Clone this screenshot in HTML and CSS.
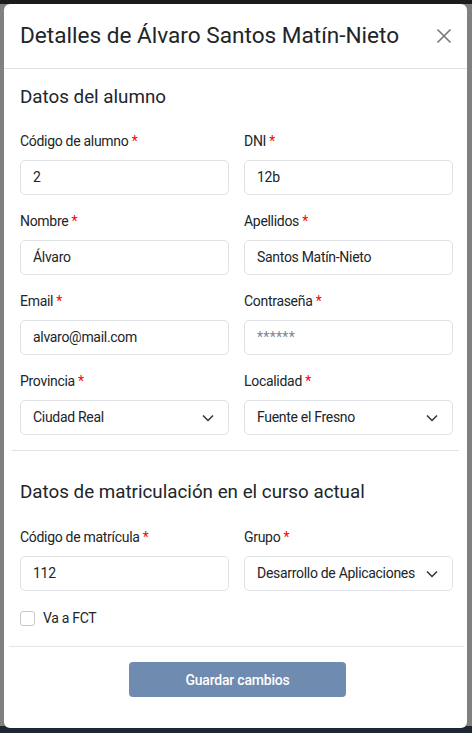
FILE: index.html
```html
<!DOCTYPE html>
<html lang="es">
<head>
<meta charset="utf-8">
<title>Detalles</title>
<link rel="stylesheet" href="styles.css">
</head>
<body>
<div class="modal">
  <div class="modal-header">
    <h5 class="modal-title">Detalles de Álvaro Santos Matín-Nieto</h5>
    <svg class="close" width="16" height="16" viewBox="0 0 16 16"><path d="M1.5 1.5L14.5 14.5M14.5 1.5L1.5 14.5" stroke="#777" stroke-width="1.6" fill="none"/></svg>
  </div>
  <div class="modal-body">
    <h6 class="section-title">Datos del alumno</h6>
    <div class="grid">
      <div class="field"><label class="label">Código de alumno <span class="req">*</span></label><div class="control">2</div></div>
      <div class="field"><label class="label">DNI <span class="req">*</span></label><div class="control">12b</div></div>
      <div class="field"><label class="label">Nombre <span class="req">*</span></label><div class="control">Álvaro</div></div>
      <div class="field"><label class="label">Apellidos <span class="req">*</span></label><div class="control">Santos Matín-Nieto</div></div>
      <div class="field"><label class="label">Email <span class="req">*</span></label><div class="control">alvaro@mail.com</div></div>
      <div class="field"><label class="label">Contraseña <span class="req">*</span></label><div class="control placeholder">******</div></div>
      <div class="field"><label class="label">Provincia <span class="req">*</span></label><div class="control select"><span class="select-text">Ciudad Real</span><svg class="chev" width="12" height="8" viewBox="0 0 12 8"><path d="M1 1.5L6 6.5L11 1.5" stroke="#333" stroke-width="1.5" fill="none"/></svg></div></div>
      <div class="field"><label class="label">Localidad <span class="req">*</span></label><div class="control select"><span class="select-text">Fuente el Fresno</span><svg class="chev" width="12" height="8" viewBox="0 0 12 8"><path d="M1 1.5L6 6.5L11 1.5" stroke="#333" stroke-width="1.5" fill="none"/></svg></div></div>
    </div>
    <hr class="divider">
    <h6 class="section-title second">Datos de matriculación en el curso actual</h6>
    <div class="grid">
      <div class="field"><label class="label">Código de matrícula <span class="req">*</span></label><div class="control">112</div></div>
      <div class="field"><label class="label">Grupo <span class="req">*</span></label><div class="control select"><span class="select-text">Desarrollo de Aplicaciones Web</span><svg class="chev" width="12" height="8" viewBox="0 0 12 8"><path d="M1 1.5L6 6.5L11 1.5" stroke="#333" stroke-width="1.5" fill="none"/></svg></div></div>
    </div>
    <div class="check-row"><span class="checkbox"></span><span class="check-label">Va a FCT</span></div>
  </div>
  <div class="modal-footer">
    <button class="btn">Guardar cambios</button>
  </div>
</div>
</body>
</html>
```
FILE: styles.css
```css
* { box-sizing: border-box; }
html { background: #7f7f7f; }
body {
  margin: 0;
  padding: 4px 5px 5px 4px;
  font-family: Roboto, "Liberation Sans", sans-serif;
  color: #212529;
  background: linear-gradient(#1c1c1c 0 4px, #808080 4px 726px, #1f2733 726px);
  min-height: 733px;
}
.modal {
  width: 463px;
  height: 724px;
  background: #fff;
  border-radius: 6px;
  display: flex;
  flex-direction: column;
  overflow: hidden;
}
.modal-header {
  height: 65px;
  flex: none;
  display: flex;
  align-items: center;
  justify-content: space-between;
  padding: 0 15px 0 16px;
  border-bottom: 1px solid #dee2e6;
}
.modal-title {
  margin: 0;
  font-size: 22.6px;
  font-weight: 400;
  line-height: 26px;
  color: #212529;
}
.close { display: block; }
.modal-body {
  flex: 1;
  padding: 17px 14px 0 16px;
}
.section-title {
  margin: 0 0 23px;
  font-size: 18.8px;
  font-weight: 400;
  line-height: 22px;
}
.section-title.second { margin-bottom: 24px; }
.grid {
  display: grid;
  grid-template-columns: minmax(0, 1fr) minmax(0, 1fr);
  column-gap: 15px;
  row-gap: 16px;
}
.field { display: flex; flex-direction: column; min-width: 0; }
.label {
  font-size: 14px;
  letter-spacing: -0.3px;
  line-height: 20px;
  margin-bottom: 9px;
  color: #212529;
}
.req { color: #ff0000; }
.control {
  height: 35px;
  border: 1px solid #dee2e6;
  border-radius: 5px;
  padding: 0 12px;
  font-size: 14px;
  letter-spacing: -0.3px;
  line-height: 33px;
  color: #212529;
  white-space: nowrap;
  overflow: hidden;
}
.control.placeholder { color: #7d8690; letter-spacing: 0.3px; }
.control.select {
  display: flex;
  align-items: center;
  justify-content: space-between;
  padding-right: 14px;
}
.select-text {
  overflow: hidden;
  white-space: nowrap;
  flex: 1;
  min-width: 0;
  margin-right: 10px;
}
.chev { flex: none; }
.divider {
  margin: 15px -6px 0 -8px;
  border: 0;
  border-top: 1px solid #dee2e6;
  margin-bottom: 30px;
}
.check-row {
  display: flex;
  align-items: center;
  margin-top: 17px;
}
.checkbox {
  width: 15px;
  height: 15px;
  border: 1px solid #c4c9cf;
  border-radius: 3px;
  margin-right: 8px;
}
.check-label { font-size: 14px; letter-spacing: -0.3px; line-height: 20px; }
.modal-footer {
  flex: none;
  margin: 0 3px 0 5px;
  border-top: 1px solid #e3e6ea;
  padding: 15px 0 31px;
  display: flex;
  justify-content: center;
}
.btn {
  width: 217px;
  height: 35px;
  border: 0;
  border-radius: 4px;
  background: #6f8bb0;
  color: #fff;
  font-family: Roboto, "Liberation Sans", sans-serif;
  font-size: 14px;
  font-weight: 500;
  letter-spacing: -0.2px;
  margin-left: 2px;
}
```
